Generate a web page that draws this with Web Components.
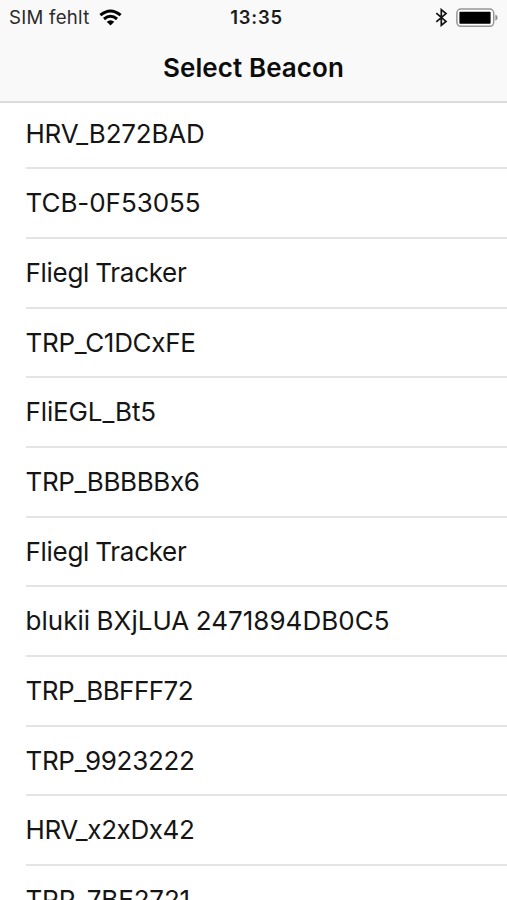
<!DOCTYPE html>
<html lang="de">
<head>
<meta charset="utf-8">
<title>Select Beacon</title>
<style>
html, body { margin: 0; height: 900px; overflow: hidden; background: #fff; }
</style>
</head>
<body>
<beacon-screen></beacon-screen>
<script>
// Text whose tracking is adjusted so that it fills the given width.
class FitText extends HTMLElement {
  connectedCallback() {
    const text = this.getAttribute('text');
    const root = this.attachShadow({ mode: 'open' });
    root.innerHTML = `<style>:host{display:inline-block;white-space:pre}span{display:inline-block}</style><span></span>`;
    const span = root.querySelector('span');
    span.textContent = text;
    const target = parseFloat(this.getAttribute('fit'));
    const natural = span.getBoundingClientRect().width;
    span.style.letterSpacing = ((target - natural) / text.length).toFixed(3) + 'px';
  }
}
customElements.define('fit-text', FitText);

class StatusBar extends HTMLElement {
  constructor() {
    super();
    this.attachShadow({ mode: 'open' }).innerHTML = `
<style>
:host { display: grid; grid-template-columns: 1fr auto 1fr; align-items: center; height: 34px; padding: 0 8px 0 9px; color: #2a2a2a; font-size: 18.6px; line-height: 35px; }
.left { display: flex; align-items: center; gap: 9px; }
.time { font-weight: 600; color: #1c1c1c; font-size: 18.4px; padding-left: 5px; }
.right { display: flex; align-items: center; justify-content: flex-end; gap: 8px; }
svg { display: block; }
</style>
<div class="left"><fit-text text="SIM fehlt" fit="80.5"></fit-text>
<svg width="23" height="17" viewBox="0 0 23 17" fill="none" stroke="#000" stroke-width="3"><path d="M1.4 6.2Q11.5-2.2 21.6 6.2M5 10Q11.5 4.4 18 10"/><path d="M7.7 12.8Q11.5 9.8 15.3 12.8L11.5 16.6Z" fill="#000" stroke="none"/></svg></div>
<div class="time"><fit-text text="13:35" fit="52.5"></fit-text></div>
<div class="right">
<svg width="13" height="19" viewBox="0 0 13 19" fill="none" stroke="#111" stroke-width="1.7"><path d="M1.3 5.2 11 13.4 6.3 17.3V1.7L11 5.6 1.3 13.8"/></svg>
<svg width="43" height="20" viewBox="0 0 43 20"><rect x=".9" y="1.1" width="36.8" height="17.2" rx="4" fill="#fff" stroke="#969696" stroke-width="1.5"/><rect x="3.4" y="3.7" width="31.2" height="12" rx=".8"/><path d="M39.4 6.6q2.2 1 2.2 3.1t-2.2 3.1z" fill="#8c8c8c"/></svg>
</div>`;
  }
}
customElements.define('status-bar', StatusBar);

class NavHeader extends HTMLElement {
  constructor() {
    super();
    this.attachShadow({ mode: 'open' }).innerHTML = `
<style>
:host { display: block; flex: none; height: 101px; position: relative; z-index: 1; background: #f9f9f9; border-bottom: 2px solid #dcdcdc; }
.title { text-align: center; font-size: 26px; font-weight: 600; line-height: 68px; color: #0c0c0c; }
</style>
<status-bar></status-bar>
<div class="title"><fit-text text="Select Beacon" fit="181"></fit-text></div>`;
  }
}
customElements.define('nav-header', NavHeader);

class BeaconRow extends HTMLElement {
  connectedCallback() {
    this.attachShadow({ mode: 'open' }).innerHTML = `
<style>
:host { display: block; box-sizing: border-box; height: 69.67px; margin-left: 25.5px; border-bottom: 2px solid #e4e4e4; font-size: 26px; line-height: 67.4px; word-spacing: -0.8px; color: #151515; }
</style>
<fit-text text="${this.getAttribute('name')}" fit="${this.getAttribute('fit')}"></fit-text>`;
  }
}
customElements.define('beacon-row', BeaconRow);

class BeaconScreen extends HTMLElement {
  connectedCallback() {
    const rows = [['HRV_B272BAD', 179], ['TCB-0F53055', 175], ['Fliegl Tracker', 161], ['TRP_C1DCxFE', 170],
      ['FliEGL_Bt5', 130.5], ['TRP_BBBBBx6', 174], ['Fliegl Tracker', 161], ['blukii BXjLUA 2471894DB0C5', 364],
      ['TRP_BBFFF72', 167.5], ['TRP_9923222', 169], ['HRV_x2xDx42', 169], ['TRP_7BE2721', 164.5]];
    this.attachShadow({ mode: 'open' }).innerHTML = `
<style>
:host { display: flex; flex-direction: column; width: 507px; height: 900px; overflow: hidden; background: #fff; font-family: Inter, "Liberation Sans", sans-serif; }
.list { margin-top: -3.4px; }
</style>
<nav-header></nav-header>
<div class="list">${rows.map(([n, w]) => `<beacon-row name="${n}" fit="${w}"></beacon-row>`).join('')}</div>`;
  }
}
customElements.define('beacon-screen', BeaconScreen);
</script>
</body>
</html>
